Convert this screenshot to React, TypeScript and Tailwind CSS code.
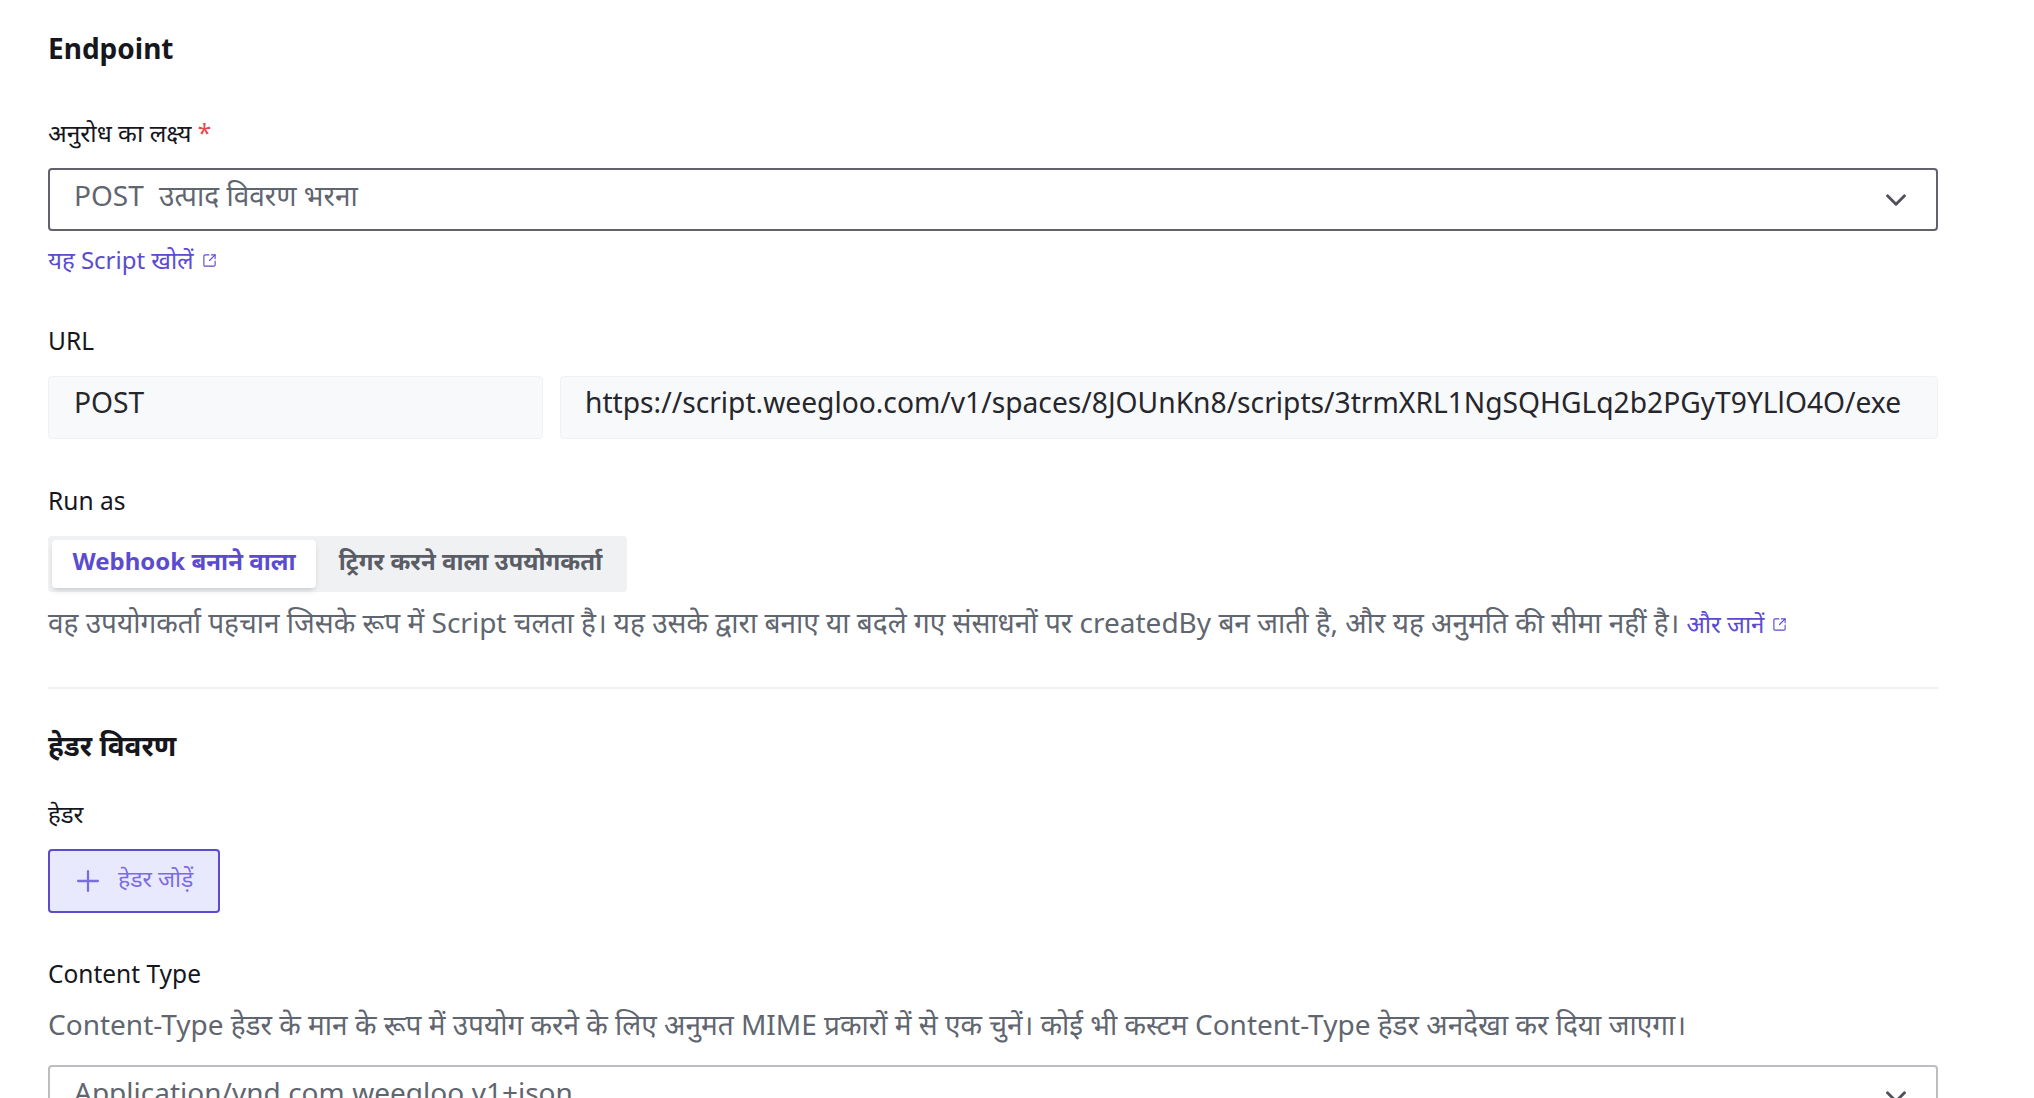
import { ChevronDown, Plus, SquareArrowOutUpRight } from "lucide-react";

const font = "font-['Noto_Sans','Noto_Sans_Devanagari','Lohit_Devanagari',sans-serif]";

function ExternalLink({ label }: { label: string }) {
  return (
    <a className="inline-flex items-center gap-2 text-[24px] text-[#5b4bd1]">
      {label}
      <SquareArrowOutUpRight size={15} strokeWidth={1.8} />
    </a>
  );
}

export default function App() {
  return (
    <div className={`${font} h-screen overflow-hidden bg-white pl-[48px] pr-[96px] pt-[29px] text-[#16161d]`}>
      {/* Endpoint */}
      <h2 className="text-[28px] font-bold leading-[38px]">Endpoint</h2>

      <div className="mt-[50px] text-[24.5px] leading-[32px]">
        अनुरोध का लक्ष्य <span className="text-[#e5484d]">*</span>
      </div>
      <div className="mt-[19px] flex h-[63px] items-center justify-between rounded border-2 border-[#62626f] pl-[24px] pr-[23px]">
        <div className="-mt-[9px] text-[28px] text-[#5f6670]">
          POST <span className="ml-2">उत्पाद विवरण भरना</span>
        </div>
        <ChevronDown size={34} strokeWidth={2} className="text-[#50505c]" />
      </div>
      <div className="mt-[13px] h-[32px] leading-[32px]">
        <ExternalLink label="यह Script खोलें" />
      </div>

      <div className="mt-[48px] text-[24.5px] leading-[34px]">URL</div>
      <div className="mt-[18px] flex gap-[17px]">
        <div className="h-[63px] w-[495px] shrink-0 rounded border border-[#f0f1f2] bg-[#f8f9fa] pl-[25px] pt-[5px] text-[28.2px] leading-[40px] text-[#26262d]">
          POST
        </div>
        <div className="h-[63px] flex-1 rounded border border-[#f0f1f2] bg-[#f8f9fa] pl-[24px] pt-[5px] text-[28.2px] leading-[40px] text-[#26262d]">
          https://script.weegloo.com/v1/spaces/8JOUnKn8/scripts/3trmXRL1NgSQHGLq2b2PGyT9YLlO4O/exe
        </div>
      </div>

      <div className="mt-[45px] text-[24.5px] leading-[34px]">Run as</div>
      <div className="mt-[18px] inline-flex h-[56px] items-center rounded bg-[#eff1f3] px-[4px] text-[24px] font-bold">
        <div className="flex h-[48px] w-[264px] items-center justify-center rounded bg-white pb-[7px] text-[#5b4bd1] shadow-md">
          Webhook बनाने वाला
        </div>
        <div className="flex h-[48px] w-[307px] items-center justify-center pb-[7px] pl-[2px] text-[#5a5d66]">
          ट्रिगर करने वाला उपयोगकर्ता
        </div>
      </div>
      <div className="mt-[11px] text-[28px] leading-[38px] text-[#5f6670]">
        वह उपयोगकर्ता पहचान जिसके रूप में Script चलता है। यह उसके द्वारा बनाए या बदले गए संसाधनों पर createdBy बन जाती है, और यह अनुमति की सीमा नहीं है।{" "}
        <ExternalLink label="और जानें" />
      </div>

      <hr className="mt-[44px] border-t-2 border-[#f0f1f2]" />

      {/* Header details */}
      <h2 className="mt-[37px] text-[28px] font-bold leading-[38px]">हेडर विवरण</h2>
      <div className="mt-[34px] text-[24px] leading-[32px]">हेडर</div>
      <button className="mt-[19px] flex h-[64px] w-[172px] items-center rounded border-2 border-[#5b4bd1] bg-[#e9e9fd] pl-[21px] text-[23px] text-[#7a6de0]">
        <Plus size={34} strokeWidth={1.6} />
        <span className="ml-[13px] pb-[6px]">हेडर जोड़ें</span>
      </button>

      <div className="mt-[44px] text-[24.5px] leading-[34px]">Content Type</div>
      <div className="mt-[14px] text-[28px] leading-[38px] text-[#5f6670]">
        Content-Type हेडर के मान के रूप में उपयोग करने के लिए अनुमत MIME प्रकारों में से एक चुनें। कोई भी कस्टम Content-Type हेडर अनदेखा कर दिया जाएगा।
      </div>
      <div className="mt-[22px] flex h-[63px] items-center justify-between rounded border-2 border-[#bdbdc2] pl-[24px] pr-[23px]">
        <div className="-mt-[9px] text-[28px] text-[#5f6670]">Application/vnd.com.weegloo.v1+json</div>
        <ChevronDown size={34} strokeWidth={2} className="text-[#50505c]" />
      </div>
    </div>
  );
}
